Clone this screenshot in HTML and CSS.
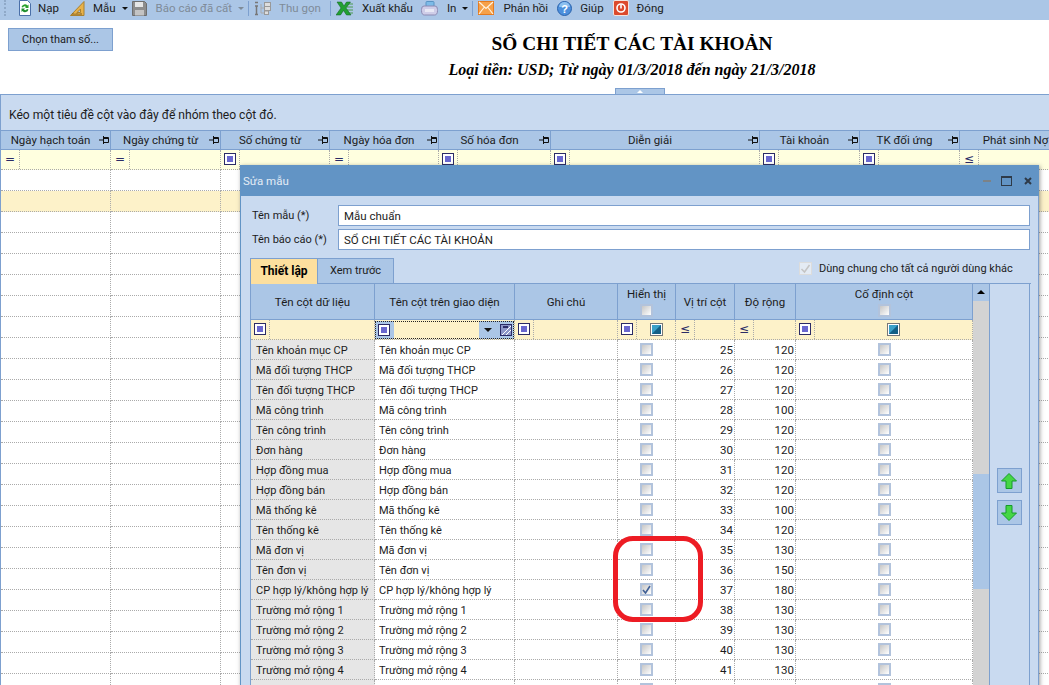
FILE: index.html
```html
<!DOCTYPE html>
<html>
<head>
  <title>Sổ chi tiết các tài khoản</title>
  <link rel="stylesheet" href="styles.css">
</head>
<body>
  <svg class="sprites" width="0" height="0">
    <symbol id="pin" viewBox="0 0 10 8"><path d="M0 4h4M4.500 0v8M4.500 1.500h5v5h-5M5 2.500h4" fill="none" stroke="#111"/></symbol>
    <symbol id="filter-in" viewBox="0 0 12 12"><rect x=".5" y=".5" width="11" height="11" fill="#fff" stroke="#2b2b66"/><rect x="3" y="3" width="6" height="6" fill="#6a68cf"/></symbol>
    <symbol id="filter-teal" viewBox="0 0 13 13"><rect x=".5" y=".5" width="12" height="12" fill="#fff" stroke="#777"/><rect x="2" y="2" width="9" height="9" fill="#1e7fae"/><path d="M2 2h9L2 11z" fill="#3aa0c8"/><path d="M11 2v9H2z" fill="#135f86"/></symbol>
  </svg>

  <div class="toolbar">
    <span class="grip"></span>
    <a class="tool tool-nap">
      <svg width="14" height="16" viewBox="0 0 14 16"><path d="M1.500 .5h8l3 3v12h-11z" fill="#fff" stroke="#4a6fa8"/><path d="M3.500 7a3.500 3.500 0 0 1 6-1.500l1-1v3.500h-3.500l1-1a2 2 0 0 0-3 .5z" fill="#2aa12a"/><path d="M10.500 9.500a3.500 3.500 0 0 1-6 1.500l-1 1v-3.500h3.500l-1 1a2 2 0 0 0 3-.5z" fill="#1f8f2f"/></svg>
      Nạp
    </a>
    <a class="tool tool-mau">
      <svg width="15" height="15" viewBox="0 0 15 15"><path d="M14 .5v14h-13.500z" fill="#e8b24a" stroke="#a9802f"/><path d="M10.500 8v3.500h-3.500z" fill="#abc6e6" stroke="#a9802f"/><path d="M3 14v-2M5 14v-1.500M7 14v-2M9 14v-1.500M11 14v-2" stroke="#7a5a20" fill="none"/></svg>
      Mẫu<i class="caret"></i>
    </a>
    <a class="tool tool-luu off">
      <svg width="15" height="15" viewBox="0 0 15 15"><path d="M.5.500h12l2 2v12h-14z" fill="#8d8d8d" stroke="#6e6e6e"/><rect x="3" y="1" width="8" height="5" fill="#e6e6e6"/><rect x="3" y="9" width="9" height="5.500" fill="#c4c4c4"/></svg>
      Báo cáo đã cất<i class="caret"></i>
    </a>
    <span class="sep sep-1"></span>
    <a class="tool tool-gon off">
      <svg width="18" height="15" viewBox="0 0 18 15"><path d="M1 1.500h3M1 5h3M2.500 5v8M1 13.500h3" stroke="#777" stroke-width="1.500" fill="none"/><path d="M7 3v9M7 7h4M7 12h4" stroke="#aaa" fill="none"/><rect x="10.500" y="1.500" width="6" height="4" fill="#ddd" stroke="#999"/><rect x="10.500" y="5.500" width="6" height="4" fill="#ddd" stroke="#999"/><rect x="10.500" y="10" width="4" height="3.500" fill="#ddd" stroke="#999"/></svg>
      Thu gọn
    </a>
    <span class="sep sep-2"></span>
    <a class="tool tool-xuat">
      <svg width="18" height="15" viewBox="0 0 18 15"><path d="M10 3h7M11 6h6M11 9h6M10 12h7" stroke="#4c9a52"/><path d="M1 1h4.500l2.500 4 2.500-4h4l-4.500 6 5 7h-4.500l-3-4.500-3 4.500h-4.500l5-7z" fill="#22a033" stroke="#0f5c1a" stroke-width=".5"/></svg>
      Xuất khẩu
    </a>
    <a class="tool tool-in">
      <svg width="17" height="15" viewBox="0 0 17 15"><rect x="5" y="0.500" width="8" height="5" rx="1" fill="#7dbbe8" stroke="#5a94c4"/><path d="M3 5h11q2.500 0 2.500 3.500v1q0 4.500-3 4.500h-10q-3 0-3-4.500v-1q0-3.500 2.500-3.500z" fill="#cfcde8" stroke="#8c8ab3"/><rect x="4" y="8" width="9" height="3" fill="#e8e8f5"/></svg>
      In<i class="caret"></i>
    </a>
    <span class="sep sep-3"></span>
    <a class="tool tool-hoi">
      <svg width="16" height="14" viewBox="0 0 16 14"><rect x=".5" y=".5" width="15" height="13" fill="#f6a14a" stroke="#e57b1f"/><path d="M1 1l7 6.500 7-6.500M1 13l5-6.500M15 13l-5-6.500" fill="none" stroke="#fff3df" stroke-width="1.200"/></svg>
      Phản hồi
    </a>
    <a class="tool tool-giup">
      <svg width="15" height="15" viewBox="0 0 15 15"><circle cx="7.500" cy="7.500" r="7" fill="#4c8fdc" stroke="#2a62ac"/><path d="M2 6a5.500 5 0 0 1 11 0z" fill="#8cc0f0"/><text x="7.500" y="11.500" text-anchor="middle" font-family="Liberation Sans" font-size="11" font-weight="700" fill="#fff">?</text></svg>
      Giúp
    </a>
    <a class="tool tool-dong">
      <svg width="16" height="16" viewBox="0 0 16 16"><rect x=".5" y=".5" width="15" height="15" rx="1.500" fill="#dc4a2c" stroke="#f3e3dc"/><circle cx="8" cy="8" r="4" fill="none" stroke="#fff" stroke-width="1.600"/><path d="M8 4.500v4" stroke="#fff" stroke-width="1.600"/></svg>
      Đóng
    </a>
  </div>

  <div class="report">
    <button class="btn-param">Chọn tham số...</button>
    <div class="report-title">
      <h1>SỔ CHI TIẾT CÁC TÀI KHOẢN</h1>
      <h2>Loại tiền: USD; Từ ngày 01/3/2018 đến ngày 21/3/2018</h2>
    </div>
    <span class="splitter"></span>
  </div>

  <div class="group-panel">Kéo một tiêu đề cột vào đây để nhóm theo cột đó.</div>

  <table class="main-grid">
    <colgroup>
      <col class="m1"><col class="m2"><col class="m3"><col class="m4"><col class="m5"><col class="m6"><col class="m7"><col class="m8"><col class="m9">
    </colgroup>
    <thead>
      <tr>
        <th>Ngày hạch toán<svg class="pin"><use href="#pin"/></svg></th>
        <th>Ngày chứng từ<svg class="pin"><use href="#pin"/></svg></th>
        <th>Số chứng từ<svg class="pin"><use href="#pin"/></svg></th>
        <th>Ngày hóa đơn<svg class="pin"><use href="#pin"/></svg></th>
        <th>Số hóa đơn<svg class="pin"><use href="#pin"/></svg></th>
        <th>Diễn giải<svg class="pin"><use href="#pin"/></svg></th>
        <th>Tài khoản<svg class="pin"><use href="#pin"/></svg></th>
        <th>TK đối ứng<svg class="pin"><use href="#pin"/></svg></th>
        <th>Phát sinh Nợ<svg class="pin"><use href="#pin"/></svg></th>
      </tr>
      <tr class="main-filter">
        <td><span class="fop">=</span></td>
        <td><span class="fop">=</span></td>
        <td><span class="fop"><svg class="fsq"><use href="#filter-in"/></svg></span></td>
        <td><span class="fop">=</span></td>
        <td><span class="fop"><svg class="fsq"><use href="#filter-in"/></svg></span></td>
        <td><span class="fop"><svg class="fsq"><use href="#filter-in"/></svg></span></td>
        <td><span class="fop"><svg class="fsq"><use href="#filter-in"/></svg></span></td>
        <td><span class="fop"><svg class="fsq"><use href="#filter-in"/></svg></span></td>
        <td><span class="fop">≤</span></td>
      </tr>
    </thead>
    <tbody>
      <tr><td></td><td></td><td></td><td></td><td></td><td></td><td></td><td></td><td></td></tr>
      <tr class="sel"><td></td><td></td><td></td><td></td><td></td><td></td><td></td><td></td><td></td></tr>
      <tr><td></td><td></td><td></td><td></td><td></td><td></td><td></td><td></td><td></td></tr>
      <tr><td></td><td></td><td></td><td></td><td></td><td></td><td></td><td></td><td></td></tr>
      <tr><td></td><td></td><td></td><td></td><td></td><td></td><td></td><td></td><td></td></tr>
      <tr><td></td><td></td><td></td><td></td><td></td><td></td><td></td><td></td><td></td></tr>
      <tr><td></td><td></td><td></td><td></td><td></td><td></td><td></td><td></td><td></td></tr>
      <tr><td></td><td></td><td></td><td></td><td></td><td></td><td></td><td></td><td></td></tr>
      <tr><td></td><td></td><td></td><td></td><td></td><td></td><td></td><td></td><td></td></tr>
      <tr><td></td><td></td><td></td><td></td><td></td><td></td><td></td><td></td><td></td></tr>
      <tr><td></td><td></td><td></td><td></td><td></td><td></td><td></td><td></td><td></td></tr>
      <tr><td></td><td></td><td></td><td></td><td></td><td></td><td></td><td></td><td></td></tr>
      <tr><td></td><td></td><td></td><td></td><td></td><td></td><td></td><td></td><td></td></tr>
      <tr><td></td><td></td><td></td><td></td><td></td><td></td><td></td><td></td><td></td></tr>
      <tr><td></td><td></td><td></td><td></td><td></td><td></td><td></td><td></td><td></td></tr>
      <tr><td></td><td></td><td></td><td></td><td></td><td></td><td></td><td></td><td></td></tr>
      <tr><td></td><td></td><td></td><td></td><td></td><td></td><td></td><td></td><td></td></tr>
      <tr><td></td><td></td><td></td><td></td><td></td><td></td><td></td><td></td><td></td></tr>
      <tr><td></td><td></td><td></td><td></td><td></td><td></td><td></td><td></td><td></td></tr>
      <tr><td></td><td></td><td></td><td></td><td></td><td></td><td></td><td></td><td></td></tr>
      <tr><td></td><td></td><td></td><td></td><td></td><td></td><td></td><td></td><td></td></tr>
      <tr><td></td><td></td><td></td><td></td><td></td><td></td><td></td><td></td><td></td></tr>
      <tr><td></td><td></td><td></td><td></td><td></td><td></td><td></td><td></td><td></td></tr>
      <tr><td></td><td></td><td></td><td></td><td></td><td></td><td></td><td></td><td></td></tr>
      <tr><td></td><td></td><td></td><td></td><td></td><td></td><td></td><td></td><td></td></tr>
    </tbody>
  </table>

  <div class="dialog">
    <div class="dialog-title">
      <span class="dialog-name">Sửa mẫu</span>
      <i class="win-min"></i>
      <i class="win-max"></i>
      <svg class="win-close" width="8" height="8" viewBox="0 0 8 8"><path d="M1 1l6 6M7 1l-6 6" stroke="#2e3a48" stroke-width="2"/></svg>
    </div>
    <div class="dialog-body">
      <div class="form-row"><label>Tên mẫu (*)</label><input value="Mẫu chuẩn" readonly></div>
      <div class="form-row"><label>Tên báo cáo (*)</label><input value="SỔ CHI TIẾT CÁC TÀI KHOẢN" readonly></div>

      <div class="tab-row">
        <span class="tab active">Thiết lập</span>
        <span class="tab">Xem trước</span>
        <span class="share">
          <i class="share-check"><svg width="11" height="11" viewBox="0 0 11 11"><path d="M1.500 6l3 3 5-7" fill="none" stroke="#c4c4c4" stroke-width="1.500"/></svg></i>
          Dùng chung cho tất cả người dùng khác
        </span>
      </div>

      <div class="grid-wrap">
        <table class="field-grid">
          <colgroup>
            <col class="f1"><col class="f2"><col class="f3"><col class="f4"><col class="f5"><col class="f6"><col class="f7">
          </colgroup>
          <thead>
            <tr>
              <th>Tên cột dữ liệu</th>
              <th>Tên cột trên giao diện</th>
              <th>Ghi chú</th>
              <th class="th-check">Hiển thị<i class="cb"></i></th>
              <th>Vị trí cột</th>
              <th>Độ rộng</th>
              <th class="th-check">Cố định cột<i class="cb"></i></th>
            </tr>
            <tr class="field-filter">
              <td><span class="fop"><svg class="fsq"><use href="#filter-in"/></svg></span></td>
              <td class="focus">
                <div class="focus-box">
                  <span class="fop"><svg class="fsq"><use href="#filter-in"/></svg></span>
                  <span class="focus-input"></span>
                  <span class="focus-tools">
                    <i class="caret dark"></i>
                    <svg width="12" height="12" viewBox="0 0 12 12"><rect x=".5" y=".5" width="11" height="11" fill="#8d96c8" stroke="#2b2b66"/><path d="M2 11L11 2M6 11l5-5" stroke="#fff"/><path d="M3 3h5" stroke="#2b2b66" stroke-width="2"/></svg>
                  </span>
                </div>
              </td>
              <td><span class="fop"><svg class="fsq"><use href="#filter-in"/></svg></span></td>
              <td><span class="fop"><svg class="fsq"><use href="#filter-in"/></svg></span><svg class="fteal"><use href="#filter-teal"/></svg></td>
              <td><span class="fop">≤</span></td>
              <td><span class="fop">≤</span></td>
              <td><span class="fop"><svg class="fsq"><use href="#filter-in"/></svg></span><svg class="fteal fteal-wide"><use href="#filter-teal"/></svg></td>
            </tr>
          </thead>
          <tbody>
            <tr><td class="key">Tên khoản mục CP</td><td>Tên khoản mục CP</td><td></td><td class="mid"><i class="cb"></i></td><td class="num">25</td><td class="num">120</td><td class="mid"><i class="cb"></i></td></tr>
            <tr><td class="key">Mã đối tượng THCP</td><td>Mã đối tượng THCP</td><td></td><td class="mid"><i class="cb"></i></td><td class="num">26</td><td class="num">120</td><td class="mid"><i class="cb"></i></td></tr>
            <tr><td class="key">Tên đối tượng THCP</td><td>Tên đối tượng THCP</td><td></td><td class="mid"><i class="cb"></i></td><td class="num">27</td><td class="num">120</td><td class="mid"><i class="cb"></i></td></tr>
            <tr><td class="key">Mã công trình</td><td>Mã công trình</td><td></td><td class="mid"><i class="cb"></i></td><td class="num">28</td><td class="num">100</td><td class="mid"><i class="cb"></i></td></tr>
            <tr><td class="key">Tên công trình</td><td>Tên công trình</td><td></td><td class="mid"><i class="cb"></i></td><td class="num">29</td><td class="num">120</td><td class="mid"><i class="cb"></i></td></tr>
            <tr><td class="key">Đơn hàng</td><td>Đơn hàng</td><td></td><td class="mid"><i class="cb"></i></td><td class="num">30</td><td class="num">120</td><td class="mid"><i class="cb"></i></td></tr>
            <tr><td class="key">Hợp đồng mua</td><td>Hợp đồng mua</td><td></td><td class="mid"><i class="cb"></i></td><td class="num">31</td><td class="num">120</td><td class="mid"><i class="cb"></i></td></tr>
            <tr><td class="key">Hợp đồng bán</td><td>Hợp đồng bán</td><td></td><td class="mid"><i class="cb"></i></td><td class="num">32</td><td class="num">120</td><td class="mid"><i class="cb"></i></td></tr>
            <tr><td class="key">Mã thống kê</td><td>Mã thống kê</td><td></td><td class="mid"><i class="cb"></i></td><td class="num">33</td><td class="num">100</td><td class="mid"><i class="cb"></i></td></tr>
            <tr><td class="key">Tên thống kê</td><td>Tên thống kê</td><td></td><td class="mid"><i class="cb"></i></td><td class="num">34</td><td class="num">120</td><td class="mid"><i class="cb"></i></td></tr>
            <tr><td class="key">Mã đơn vị</td><td>Mã đơn vị</td><td></td><td class="mid"><i class="cb"></i></td><td class="num">35</td><td class="num">130</td><td class="mid"><i class="cb"></i></td></tr>
            <tr><td class="key">Tên đơn vị</td><td>Tên đơn vị</td><td></td><td class="mid"><i class="cb"></i></td><td class="num">36</td><td class="num">150</td><td class="mid"><i class="cb"></i></td></tr>
            <tr><td class="key">CP hợp lý/không hợp lý</td><td>CP hợp lý/không hợp lý</td><td></td><td class="mid"><i class="cb on"><svg width="9" height="9" viewBox="0 0 9 9"><path d="M1 5l2.500 3 4.500-7" fill="none" stroke="#3f5f95" stroke-width="1.600"/></svg></i></td><td class="num">37</td><td class="num">180</td><td class="mid"><i class="cb"></i></td></tr>
            <tr><td class="key">Trường mở rộng 1</td><td>Trường mở rộng 1</td><td></td><td class="mid"><i class="cb"></i></td><td class="num">38</td><td class="num">130</td><td class="mid"><i class="cb"></i></td></tr>
            <tr><td class="key">Trường mở rộng 2</td><td>Trường mở rộng 2</td><td></td><td class="mid"><i class="cb"></i></td><td class="num">39</td><td class="num">130</td><td class="mid"><i class="cb"></i></td></tr>
            <tr><td class="key">Trường mở rộng 3</td><td>Trường mở rộng 3</td><td></td><td class="mid"><i class="cb"></i></td><td class="num">40</td><td class="num">130</td><td class="mid"><i class="cb"></i></td></tr>
            <tr><td class="key">Trường mở rộng 4</td><td>Trường mở rộng 4</td><td></td><td class="mid"><i class="cb"></i></td><td class="num">41</td><td class="num">130</td><td class="mid"><i class="cb"></i></td></tr>
            <tr><td class="key"></td><td></td><td></td><td class="mid"><i class="cb"></i></td><td class="num"></td><td class="num"></td><td class="mid"><i class="cb"></i></td></tr>
          </tbody>
        </table>
        <div class="scrollbar">
          <span class="scroll-up"></span>
          <span class="scroll-gap"></span>
          <span class="scroll-thumb"></span>
          <span class="scroll-rest"></span>
        </div>
        <div class="side-panel">
          <button class="move">
            <svg width="16" height="16" viewBox="0 0 16 16"><path d="M8 .5l7.500 7.500h-4.500v7.500h-6v-7.500h-4.500z" fill="#45d645" stroke="#159a2a"/></svg>
          </button>
          <button class="move">
            <svg width="16" height="16" viewBox="0 0 16 16"><path d="M8 15.500l7.500-7.500h-4.500v-7.500h-6v7.500h-4.500z" fill="#45d645" stroke="#159a2a"/></svg>
          </button>
        </div>
      </div>
    </div>
  </div>

  <div class="red-mark"></div>
</body>
</html>
```

FILE: styles.css
```css
html, body {
  margin: 0;
  padding: 0;
  height: 685px;
  overflow: hidden;
}

body {
  position: relative;
  background-color: #fff;
  font-family: Roboto, sans-serif;
  font-size: 11.5px;
  color: #1c1c1c;
}

.sprites {
  position: absolute;
}

/* toolbar */
.toolbar {
  display: flex;
  align-items: center;
  box-sizing: border-box;
  height: 20px;
  padding-bottom: 4px;
  background-color: #abc6e6;
  overflow: hidden;
}

.grip {
  width: 3px;
  height: 16px;
  margin-left: 4px;
  border-left: 2px dotted #8fa9c8;
}

.tool {
  display: flex;
  align-items: center;
  white-space: nowrap;
}

.tool svg {
  flex: none;
}

.off {
  color: #7f8b98;
}

.tool-nap { margin-left: 9px; }
.tool-nap svg { margin-right: 6px; }
.tool-mau { margin-left: 11px; }
.tool-mau svg { margin-right: 8px; }
.tool-luu { margin-left: 4px; }
.tool-luu svg { margin-right: 9px; }
.tool-gon { margin-left: 5px; }
.tool-gon svg { margin-right: 7px; }
.tool-xuat { margin-left: 5px; }
.tool-xuat svg { margin-right: 8px; }
.tool-in { margin-left: 8px; }
.tool-in svg { margin-right: 9px; }
.tool-hoi { margin-left: 5px; }
.tool-hoi svg { margin-right: 9px; }
.tool-giup { margin-left: 9px; }
.tool-giup svg { margin-right: 8px; }
.tool-dong { margin-left: 9px; }
.tool-dong svg { margin-right: 8px; }

.caret {
  width: 0;
  height: 0;
  margin-left: 6px;
  border-left: 3px solid transparent;
  border-right: 3px solid transparent;
  border-top: 3px solid #111;
}

.off .caret {
  border-top-color: #7f8b98;
}

.sep {
  width: 1px;
  height: 15px;
  background-color: #7da0cf;
}

.sep-1 { margin-left: 4px; }
.sep-2 { margin-left: 9px; }
.sep-3 { margin-left: 4px; }

/* report heading */
.report {
  position: relative;
  display: flex;
  height: 74px;
}

.btn-param {
  width: 105px;
  height: 23px;
  margin: 8px 0 0 8px;
  padding: 0;
  background-color: #abc6e6;
  border: 1px solid #7da0cf;
  font-family: inherit;
  font-size: 11px;
  color: #1c1c1c;
}

.report-title {
  flex: 1;
  margin-left: 102px;
  text-align: center;
  font-family: "Liberation Serif", serif;
  color: #000;
}

.report-title h1 {
  margin: 13px 0 0;
  font-size: 19.33px;
  line-height: 22px;
}

.report-title h2 {
  margin: 5px 0 0;
  font-size: 16px;
  line-height: 19px;
  font-style: italic;
}

.splitter {
  position: absolute;
  left: 615px;
  bottom: 0;
  width: 48px;
  height: 5px;
  background-color: #abc6e6;
  border: 1px solid #7da0cf;
  border-bottom: none;
}

.splitter::after {
  content: "";
  position: absolute;
  left: 21px;
  top: 1px;
  border-left: 3px solid transparent;
  border-right: 3px solid transparent;
  border-bottom: 3px solid #fff;
}

/* report grid behind the dialog */
.group-panel {
  box-sizing: border-box;
  height: 36px;
  padding: 13px 0 0 8px;
  line-height: 14px;
  font-size: 12.1px;
  background-color: #c9daf0;
  border-top: 1px solid #7da0cf;
  border-left: 1px solid #7da0cf;
}

table {
  border-collapse: separate;
  border-spacing: 0;
  table-layout: fixed;
}

.main-grid {
  width: 1082px;
  border-left: 1px solid #7da0cf;
}

.m1 { width: 110px; }
.m2 { width: 110px; }
.m3 { width: 109px; }
.m4 { width: 109px; }
.m5 { width: 112px; }
.m6 { width: 209px; }
.m7 { width: 100px; }
.m8 { width: 100px; }
.m9 { width: 122px; }

.main-grid th {
  position: relative;
  box-sizing: border-box;
  height: 20px;
  padding: 0 10px 0 0;
  background-color: #abc6e6;
  border-top: 1px solid #7da0cf;
  border-right: 1px solid #7da0cf;
  border-bottom: 1px solid #7da0cf;
  font-weight: normal;
  white-space: nowrap;
}

.pin {
  position: absolute;
  right: 1px;
  top: 5px;
  width: 10px;
  height: 8px;
}

.main-grid td {
  box-sizing: border-box;
  height: 21px;
  padding: 0;
  border-right: 1px dotted #aaa;
  border-bottom: 1px dotted #aaa;
}

.main-filter td {
  height: 20px;
  background-color: #ffffdf;
  line-height: 14px;
}

.sel td {
  background-color: #fdf2c9;
}

.fop {
  box-sizing: border-box;
  display: inline-block;
  width: 19px;
  height: 19px;
  border-right: 1px dotted #aaa;
  line-height: 18px;
  text-align: center;
  font-family: "DejaVu Sans", sans-serif;
  font-size: 12px;
  color: #2b2b66;
  vertical-align: top;
}

.fsq {
  display: block;
  width: 12px;
  height: 12px;
  margin: 3px 0 0 3px;
}

/* dialog */
.dialog {
  position: absolute;
  left: 240px;
  top: 165px;
  width: 799px;
  height: 530px;
  box-shadow: 1px 1px 4px rgba(60, 60, 60, 0.5);
}

.dialog-title {
  display: flex;
  align-items: center;
  height: 31px;
  padding-left: 3px;
  background-color: #6294c5;
  color: #e4ecf5;
}

.dialog-name {
  flex: 1;
}

.win-min {
  width: 8px;
  height: 2px;
  margin-right: 10px;
  background-color: #7c8287;
}

.win-max {
  box-sizing: border-box;
  width: 11px;
  height: 10px;
  margin-right: 12px;
  border: 1px solid #2e3a48;
  border-top-width: 2px;
}

.win-close {
  margin-right: 7px;
}

.dialog-body {
  box-sizing: border-box;
  height: 499px;
  padding: 9px 8px 0 9px;
  background-color: #c9daf0;
  border-left: 1px solid #6294c5;
  border-right: 1px solid #7da0cf;
}

.form-row {
  display: flex;
  align-items: center;
  height: 21px;
  margin-bottom: 3px;
}

.form-row label {
  box-sizing: border-box;
  width: 88px;
  padding-left: 2px;
  font-size: 11px;
}

.form-row input {
  flex: 1;
  box-sizing: border-box;
  height: 21px;
  min-width: 0;
  padding: 0 4px 0 5px;
  background-color: #fff;
  border: 1px solid #7da0cf;
  outline: none;
  font-family: inherit;
  font-size: 11.5px;
  color: #1c1c1c;
}

.tab-row {
  display: flex;
  height: 25px;
  margin-top: 8px;
}

.tab {
  box-sizing: border-box;
  width: 76px;
  height: 26px;
  line-height: 24px;
  text-align: center;
  font-size: 11px;
  background-color: #abc6e6;
  border: 1px solid #7da0cf;
  border-left: none;
}

.tab.active {
  width: 68px;
  background-color: #fddf9e;
  border-left: 1px solid #7da0cf;
  border-bottom: none;
  font-size: 12px;
  font-weight: bold;
  color: #000;
}

.share {
  display: flex;
  align-items: center;
  height: 18px;
  margin: 1px 0 0 405px;
  font-size: 11px;
  white-space: nowrap;
}

.share-check {
  box-sizing: border-box;
  width: 13px;
  height: 13px;
  margin-right: 7px;
  background-color: #e4ebf4;
  border: 1px solid #dcdcdc;
}

.share-check svg {
  display: block;
}

.grid-wrap {
  display: flex;
  width: 780px;
  height: 420px;
  border-top: 1px solid #7da0cf;
  border-left: 1px solid #7da0cf;
}

.field-grid {
  align-self: flex-start;
  width: 722px;
  flex: none;
  background-color: #fff;
}

.f1 { width: 124px; }
.f2 { width: 140px; }
.f3 { width: 103px; }
.f4 { width: 58px; }
.f5 { width: 59px; }
.f6 { width: 61px; }
.f7 { width: 177px; }

.field-grid th {
  box-sizing: border-box;
  height: 36px;
  padding: 1px 0 0;
  background-color: #abc6e6;
  border-right: 1px solid #7da0cf;
  border-bottom: 1px solid #7da0cf;
  font-weight: normal;
  line-height: 14px;
}

.th-check .cb {
  display: block;
  margin: 3px auto 0;
}

.field-grid td {
  box-sizing: border-box;
  height: 20px;
  padding: 1px 0 0 4px;
  border-right: 1px dotted #aaa;
  border-bottom: 1px dotted #aaa;
  font-size: 11px;
  white-space: nowrap;
  overflow: hidden;
}

.field-filter td {
  padding: 0;
  background-color: #fdf2c9;
}

.field-filter .fteal {
  display: inline-block;
  width: 13px;
  height: 13px;
  margin: 3px 0 0 13px;
  vertical-align: top;
}

.field-filter .fteal-wide {
  margin-left: 72px;
}

.focus-box {
  display: flex;
  height: 18px;
  outline: 1px dotted #222;
  outline-offset: -1px;
}

.focus-box .fop {
  height: 18px;
  background-color: #abc6e6;
  border-right: none;
}

.focus-input {
  flex: 1;
}

.focus-tools {
  display: flex;
  align-items: center;
  width: 35px;
  padding-left: 5px;
  box-sizing: border-box;
  background-color: #abc6e6;
}

.caret.dark {
  margin: 0 8px 0 0;
  border-left-width: 4px;
  border-right-width: 4px;
  border-top-width: 4px;
}

.field-grid td.key {
  padding-left: 5px;
  background-color: #e6e6e6;
}

.field-grid td.mid {
  padding: 0;
  text-align: center;
}

.field-grid td.num {
  padding: 0 1px 0 0;
  font-size: 11.5px;
  text-align: right;
}

.cb {
  box-sizing: border-box;
  display: inline-block;
  width: 13px;
  height: 13px;
  border: 2px solid #b2c3dc;
  background: linear-gradient(135deg, #c6c6c6, #fff);
  vertical-align: middle;
}

.cb.on {
  line-height: 0;
}

.scrollbar {
  display: flex;
  flex-direction: column;
  width: 16px;
  border-right: 1px solid #7da0cf;
}

.scroll-up {
  position: relative;
  height: 17px;
  background-color: #abc6e6;
}

.scroll-up::after {
  content: "";
  position: absolute;
  left: 4px;
  top: 6px;
  border-left: 4px solid transparent;
  border-right: 4px solid transparent;
  border-bottom: 4px solid #000;
}

.scroll-gap {
  height: 173px;
  background-color: #d3d3d3;
}

.scroll-thumb {
  height: 115px;
  background-color: #abc6e6;
}

.scroll-rest {
  flex: 1;
  background-color: #d3d3d3;
}

.side-panel {
  display: flex;
  flex-direction: column;
  align-items: center;
  box-sizing: border-box;
  width: 40px;
  padding: 184px 1px 0 0;
  border-right: 1px solid #7da0cf;
}

.move {
  display: flex;
  align-items: center;
  justify-content: center;
  box-sizing: border-box;
  width: 25px;
  height: 25px;
  margin-bottom: 7px;
  padding: 0;
  background-color: #abc6e6;
  border: 1px solid #7da0cf;
}

.red-mark {
  position: absolute;
  left: 613px;
  top: 536px;
  box-sizing: border-box;
  width: 90px;
  height: 86px;
  border: 5px solid #ed1c24;
  border-radius: 20px;
}
```
